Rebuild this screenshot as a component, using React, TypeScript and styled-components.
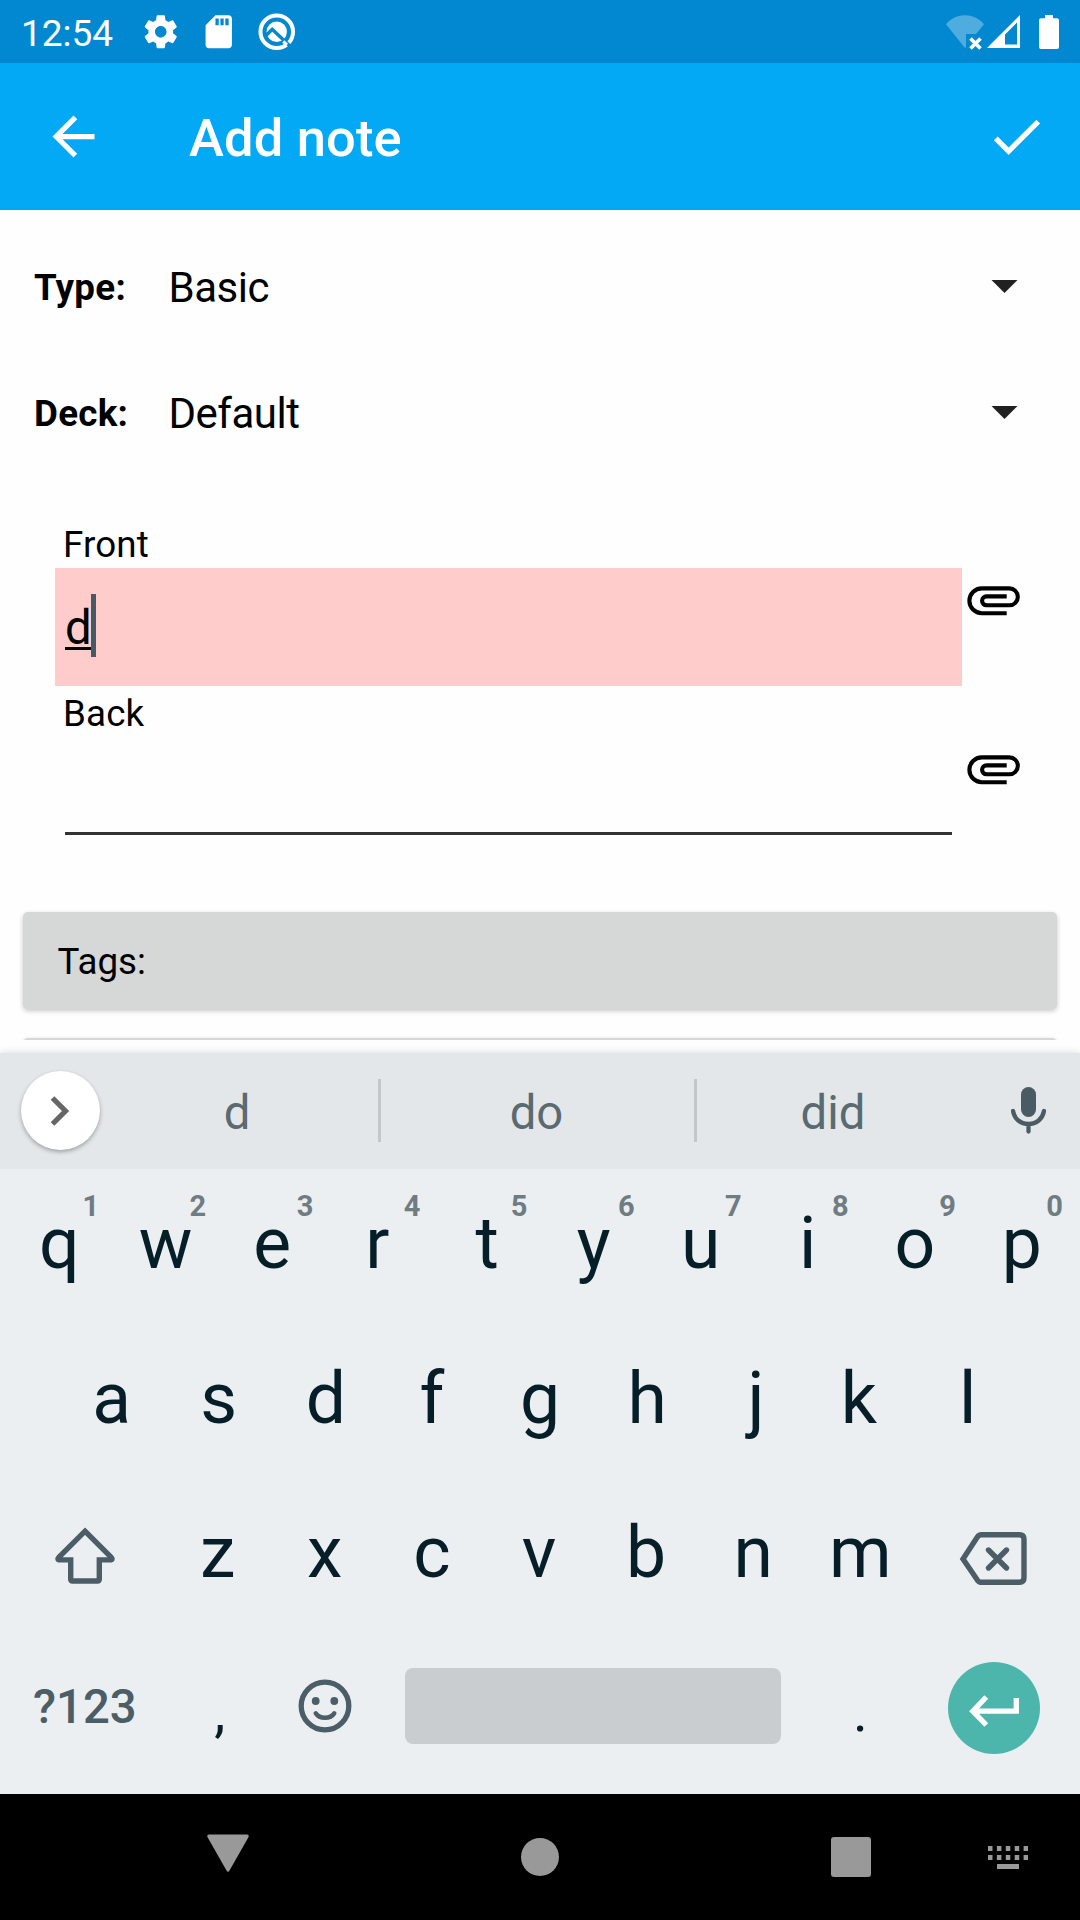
import React from "react";
import styled, { createGlobalStyle } from "styled-components";

const GlobalStyle = createGlobalStyle`
  * { box-sizing: border-box; }
  body { margin: 0; background: #fff; }
  svg { display: block; flex: none; }
`;

const Screen = styled.div`
  width: 1080px;
  height: 1920px;
  display: flex;
  flex-direction: column;
  overflow: hidden;
  background: #fefefe;
  color: #000;
  font-family: Roboto, "Liberation Sans", sans-serif;
`;

/* ---------- system status bar ---------- */
const StatusBar = styled.header`
  flex: none;
  height: 63px;
  display: flex;
  align-items: center;
  padding: 0 21px 0 21px;
  background: #0288d1;
  color: #fff;
`;
const Clock = styled.span`
  width: 120px;
  padding-top: 4px;
  font-size: 37px;
  line-height: 60px;
`;
const NotificationIcons = styled.div`
  display: flex;
  align-items: center;
  gap: 18.5px;
`;
const SystemIcons = styled.div`
  display: flex;
  align-items: center;
  margin-left: auto;
`;
const StatusSlot = styled.div<{ $right: number }>`
  margin-right: ${(p) => p.$right}px;
`;

/* ---------- app bar ---------- */
const AppBar = styled.div`
  flex: none;
  height: 147px;
  display: flex;
  align-items: center;
  padding: 0 32px 1px 42px;
  background: #03a9f4;
  color: #fff;
`;
const Title = styled.h1`
  flex: 1;
  margin: 0 0 0 84px;
  padding-top: 4px;
  font-size: 52.5px;
  font-weight: 500;
  line-height: 62px;
  letter-spacing: 0.15px;
`;

/* ---------- note form ---------- */
const Form = styled.main`
  flex: none;
  height: 830px;
  padding-top: 14px;
  display: flex;
  flex-direction: column;
  overflow: hidden;
`;
const SelectRow = styled.div`
  flex: none;
  height: 126px;
  display: flex;
  align-items: center;
  padding: 0 62px 0 34px;
`;
const SelectLabel = styled.span`
  width: 134.5px;
  font-size: 36.75px;
  font-weight: 700;
  letter-spacing: 0.25px;
`;
const SelectValue = styled.span`
  flex: 1;
  font-size: 42px;
  letter-spacing: -0.5px;
`;
const DropIcon = styled.svg`
  margin-bottom: 1px;
`;
const Fields = styled.div`
  flex: none;
  margin: 41px 55px 57px;
`;
const FieldLabel = styled.div`
  height: 51px;
  padding: 4px 0 0 8px;
  font-size: 36.75px;
  line-height: 47px;
  letter-spacing: 0.15px;
`;
const FieldRow = styled.div`
  display: flex;
  align-items: flex-start;
`;
const Input = styled.div<{ $duplicate?: boolean }>`
  width: 907px;
  height: 118px;
  display: flex;
  flex-direction: column;
  justify-content: ${(p) => (p.$duplicate ? "center" : "flex-end")};
  padding: ${(p) => (p.$duplicate ? "0 10px 3px" : "0 10px 20px")};
  background: ${(p) => (p.$duplicate ? "#ffcccc" : "transparent")};
`;
const Typed = styled.div`
  height: 63px;
  display: flex;
  align-items: flex-start;
  font-size: 47.25px;
  line-height: 63px;
`;
const Composing = styled.span`
  padding-top: 3px;
  text-decoration: underline;
  text-decoration-thickness: 3px;
  text-underline-offset: 3px;
  text-decoration-skip-ink: none;
`;
const Caret = styled.span`
  width: 5px;
  height: 63px;
  margin-left: -1px;
  background: #455a64;
`;
const Underline = styled.div`
  height: 3px;
  background: #333;
`;
const FormButton = styled.div`
  flex: none;
  height: 97px;
  margin: 0 23px 29px;
  padding: 2px 0 0 34.5px;
  border-radius: 5px;
  background: #d6d7d7;
  box-shadow: 0 2px 5px rgba(0, 0, 0, 0.22);
  font-size: 36.75px;
  line-height: 95px;
`;

/* ---------- keyboard ---------- */
const Keyboard = styled.section`
  flex: none;
  height: 741px;
  margin-top: 13px;
  display: flex;
  flex-direction: column;
  background: #eceff1;
  box-shadow: 0 -1px 7px rgba(0, 0, 0, 0.12);
  color: #061e27;
`;
const Suggestions = styled.div`
  flex: none;
  height: 116px;
  display: grid;
  grid-template-columns: 98px 280px 3px 313px 3px 274px 109px;
  align-items: center;
  background: #e3e7e9;
`;
const Expand = styled.div`
  width: 79px;
  height: 79px;
  margin: 0 0 1px 21px;
  padding-right: 1px;
  display: grid;
  place-items: center;
  border-radius: 50%;
  background: #fff;
  box-shadow: 0 2px 4px rgba(0, 0, 0, 0.3);
`;
const Suggestion = styled.span`
  padding: 4px 2px 0 0;
  text-align: center;
  font-size: 47.25px;
  line-height: 60px;
  color: #5a6a71;
`;
const Divider = styled.span`
  height: 63px;
  margin-bottom: 1px;
  background: #c2c7ca;
`;
const rowPadding = {
  full: "0 4.5px",
  inset: "0 58px",
  lower: "0 5.5px 0 3.5px",
};
const KeyRow = styled.div<{ $kind?: keyof typeof rowPadding }>`
  flex: none;
  height: 154.5px;
  display: flex;
  padding: ${(p) => rowPadding[p.$kind ?? "full"]};
`;
const Key = styled.div<{ $wide?: boolean; $center?: boolean }>`
  position: relative;
  flex: ${(p) => (p.$wide ? 1.5 : 1)} 0 0;
  display: flex;
  justify-content: center;
  align-items: ${(p) => (p.$center ? "center" : "flex-start")};
  font-size: 71.4px;
  line-height: 149px;
`;
const Letter = styled.span<{ $shift: number }>`
  margin-left: ${(p) => p.$shift * 2}px;
`;
const Hint = styled.span`
  position: absolute;
  top: 20px;
  right: 12.5px;
  font-size: 29px;
  font-weight: 700;
  line-height: 34px;
  color: #6f7c82;
`;
const Punctuation = styled.span<{ $shift?: number }>`
  margin-left: ${(p) => (p.$shift ?? 0) * 2}px;
  font-size: 56px;
  line-height: 159px;
`;
const SymbolsLabel = styled.span`
  margin-left: 2px;
  font-size: 47.25px;
  font-weight: 500;
  line-height: 149px;
  color: #4b5d66;
`;
const SpaceKey = styled.div`
  flex: none;
  width: 428.4px;
  display: flex;
  justify-content: center;
  align-items: flex-start;
  padding-top: 35.5px;
`;
const SpaceBar = styled.div`
  width: 376px;
  height: 76px;
  border-radius: 8px;
  background: #c9cdd0;
`;
const Enter = styled.div`
  width: 92px;
  height: 92px;
  margin-bottom: 3px;
  display: grid;
  place-items: center;
  border-radius: 50%;
  background: #4db6ac;
`;

/* ---------- system navigation ---------- */
const NavBar = styled.nav`
  flex: none;
  height: 126px;
  display: grid;
  grid-template-columns: 96px 264px 360px 262px 51px 47px;
  justify-items: center;
  align-items: center;
  background: #000;
`;

const ink = "#4b5d66";

const letterShift: Record<string, number> = { q: 1.2, w: 0.5, r: -2, t: 0.7, f: -1, j: 1.8, k: -2.5, l: -0.8 };

const Gear = () => (
  <svg width="39.5" height="39.5" viewBox="0 0 24 24" fill="#fff">
    <path d="M19.43 12.98c.04-.32.07-.64.07-.98s-.03-.66-.07-.98l2.11-1.65c.19-.15.24-.42.12-.64l-2-3.46c-.12-.22-.39-.3-.61-.22l-2.49 1c-.52-.4-1.08-.73-1.69-.98l-.38-2.65C14.46 2.18 14.25 2 14 2h-4c-.25 0-.46.18-.49.42l-.38 2.65c-.61.25-1.17.59-1.69.98l-2.49-1c-.23-.09-.49 0-.61.22l-2 3.46c-.13.22-.07.49.12.64l2.11 1.65c-.04.32-.07.65-.07.98s.03.66.07.98l-2.11 1.65c-.19.15-.24.42-.12.64l2 3.46c.12.22.39.3.61.22l2.49-1c.52.4 1.08.73 1.69.98l.38 2.65c.03.24.24.42.49.42h4c.25 0 .46-.18.49-.42l.38-2.65c.61-.25 1.17-.59 1.69-.98l2.49 1c.23.09.49 0 .61-.22l2-3.46c.12-.22.07-.49-.12-.64l-2.11-1.65zM12 15.5c-1.93 0-3.5-1.57-3.5-3.5s1.57-3.5 3.5-3.5 3.5 1.57 3.5 3.5-1.57 3.5-3.5 3.5z" />
  </svg>
);

const SdCard = () => (
  <svg width="39.5" height="39.5" viewBox="0 0 24 24" fill="#fff">
    <path d="M18 2h-8L4.02 8 4 20c0 1.1.9 2 2 2h12c1.1 0 2-.9 2-2V4c0-1.1-.9-2-2-2zm-6 6h-2V4h2v4zm3 0h-2V4h2v4zm3 0h-2V4h2v4z" />
  </svg>
);

const AndroidQ = () => (
  <svg width="39.5" height="39.5" viewBox="-19.75 -19.75 39.5 39.5" fill="none">
    <circle r="16.3" stroke="#fff" strokeWidth="4" />
    <circle r="10.2" fill="#fff" />
    <path d="M-10.5 3.5L-4.5 -2.5L15 16" stroke="#0288d1" strokeWidth="3.4" />
    <path d="M6.5 9.6L10.2 13.2" stroke="#fff" strokeWidth="3" />
  </svg>
);

const WifiOff = () => (
  <svg width="40" height="36" viewBox="0 0 40 36">
    <path d="M1 10.3C11-1.6 29-1.6 39 10.3L31 20H21V33L20 34Z" fill="#fff" fillOpacity="0.3" />
    <path d="M25.5 24.5l10 10M35.5 24.5l-10 10" stroke="#fff" strokeWidth="3.6" />
  </svg>
);

const Signal = () => (
  <svg width="33" height="33" viewBox="0 0 33 33" fill="#fff">
    <path fillRule="evenodd" d="M33 0V33H0ZM30 7.5L18 19.5V29.5H30Z" />
  </svg>
);

const Battery = () => (
  <svg width="20" height="34" viewBox="0 0 20 34" fill="#fff">
    <path d="M6 0h8v3.3h4a2 2 0 0 1 2 2V32a2 2 0 0 1-2 2H2a2 2 0 0 1-2-2V5.3a2 2 0 0 1 2-2h4z" />
  </svg>
);

const BackArrow = () => (
  <svg width="63" height="63" viewBox="0 0 24 24" fill="#fff">
    <path d="M20 11H7.83l5.59-5.59L12 4l-8 8 8 8 1.41-1.41L7.83 13H20v-2z" />
  </svg>
);

const Check = () => (
  <svg width="63" height="63" viewBox="0 0 24 24" fill="#fff">
    <path d="M9 16.17L4.83 12l-1.42 1.41L9 19 21 7l-1.41-1.41z" />
  </svg>
);

const DropArrow = () => (
  <DropIcon width="27" height="13" viewBox="0 0 27 13">
    <path d="M0.5 0H26.5L13.5 13Z" fill="#212121" />
  </DropIcon>
);

const Attachment = () => (
  <svg width="63" height="63" viewBox="0 0 63 63" fill="none" stroke="#000" strokeWidth="4.1">
    <path d="M44.7 45.2H19.8A12.4 12.4 0 0 1 19.8 20.4H47.4A8.45 8.45 0 0 1 47.4 37.3H24.5A4.45 4.45 0 0 1 24.5 28.4H44.7" />
  </svg>
);

const Chevron = () => (
  <svg width="20" height="30" viewBox="0 0 20 30" fill="none">
    <path d="M2.5 2L15.5 15L2.5 28" stroke="#666" strokeWidth="5.2" />
  </svg>
);

const MicIcon = styled.svg`
  margin: 0 0 1px 40px;
`;
const Mic = () => (
  <MicIcon width="35" height="47" viewBox="0 0 35 47" fill="none">
    <rect x="10" y="0" width="15" height="30" rx="7.5" fill="#4a5b64" />
    <path d="M2 24C3.5 32 9.5 37 17.5 37S31.5 32 33 24M17.5 37V44.5" stroke="#4a5b64" strokeWidth="4.3" strokeLinecap="round" />
  </MicIcon>
);

const KeyIcon = styled.svg<{ $top: number; $right?: number }>`
  margin-top: ${(p) => p.$top}px;
  margin-right: ${(p) => p.$right ?? 0}px;
`;

const Shift = () => (
  <KeyIcon $top={44} $right={-2} width="70" height="68" viewBox="0 0 70 68" fill="none">
    <path d="M35 9.2L61 35.2Q63.5 37.9 60 37.9H49.3V57Q49.3 59 47.3 59H22.7Q20.7 59 20.7 57V37.9H10Q6.5 37.9 9 35.2Z" stroke={ink} strokeWidth="5.4" />
  </KeyIcon>
);

const Backspace = () => (
  <KeyIcon $top={47} $right={2} width="77" height="68" viewBox="0 0 77 68" fill="none" stroke={ink} strokeWidth="5.4">
    <path d="M8 34L22.5 11.8Q24 9.8 26.5 9.8H64.5Q69 9.8 69 14.3V52.8Q69 57.3 64.5 57.3H26.5Q24 57.3 22.5 55.3Z" />
    <path d="M33.5 25L51.5 43M51.5 25L33.500 43" strokeLinecap="round" />
  </KeyIcon>
);

const Emoji = () => (
  <KeyIcon $top={46} width="54" height="54" viewBox="-27 -27 54 54" fill="none">
    <circle r="23.8" stroke={ink} strokeWidth="5.3" />
    <circle cx="-9.3" cy="-5" r="3.9" fill={ink} />
    <circle cx="9.3" cy="-5" r="3.9" fill={ink} />
    <path d="M-9.3 7.3C-5.5 13.3 5.5 13.3 9.3 7.3" stroke={ink} strokeWidth="4.4" strokeLinecap="round" />
  </KeyIcon>
);

const EnterIcon = styled.svg`
  margin-top: 6px;
`;
const EnterArrow = () => (
  <EnterIcon width="51" height="32" viewBox="0 0 51 32" fill="none">
    <path d="M47.3 3V16.2H5M17.3 2L3.8 16.2L17.3 30" stroke="#fff" strokeWidth="5.3" />
  </EnterIcon>
);

const NavBack = () => (
  <svg width="42" height="46" viewBox="0 0 42 46">
    <path d="M2.5 0.5H39.5Q43 0.5 41 4L22.5 36.5Q21 39 19.5 36.5L1 4Q-1 0.5 2.5 0.5Z" fill="#999" />
  </svg>
);
const NavHome = () => (
  <svg width="38" height="38" viewBox="0 0 38 38">
    <circle cx="19" cy="19" r="19" fill="#999" />
  </svg>
);
const NavRecents = () => (
  <svg width="40" height="40" viewBox="0 0 40 40">
    <rect width="40" height="40" rx="3" fill="#999" />
  </svg>
);
const NavKeyboard = () => (
  <svg width="40" height="23" viewBox="0 0 40 23" fill="#999">
    {[0, 9].map((y) =>
      [0, 1, 2, 3, 4].map((c) => <rect key={`${y}-${c}`} x={c * 8.9} y={y} width="4.5" height="5" />)
    )}
    <rect x="9" y="18" width="22" height="5" />
  </svg>
);

const LetterKey = ({ char, hint }: { char: string; hint?: number }) => (
  <Key>
    <Letter $shift={letterShift[char] ?? 0}>{char}</Letter>
    {hint !== undefined && <Hint>{hint}</Hint>}
  </Key>
);

export default function App() {
  return (
    <Screen>
      <GlobalStyle />
      <StatusBar>
        <Clock>12:54</Clock>
        <NotificationIcons>
          <Gear />
          <SdCard />
          <AndroidQ />
        </NotificationIcons>
        <SystemIcons>
          <StatusSlot $right={2}><WifiOff /></StatusSlot>
          <StatusSlot $right={19}><Signal /></StatusSlot>
          <Battery />
        </SystemIcons>
      </StatusBar>

      <AppBar>
        <BackArrow />
        <Title>Add note</Title>
        <Check />
      </AppBar>

      <Form>
        <SelectRow>
          <SelectLabel>Type:</SelectLabel>
          <SelectValue>Basic</SelectValue>
          <DropArrow />
        </SelectRow>
        <SelectRow>
          <SelectLabel>Deck:</SelectLabel>
          <SelectValue>Default</SelectValue>
          <DropArrow />
        </SelectRow>
        <Fields>
          <FieldLabel>Front</FieldLabel>
          <FieldRow>
            <Input $duplicate>
              <Typed>
                <Composing>d</Composing>
                <Caret />
              </Typed>
            </Input>
            <Attachment />
          </FieldRow>
          <FieldLabel>Back</FieldLabel>
          <FieldRow>
            <Input>
              <Underline />
            </Input>
            <Attachment />
          </FieldRow>
        </Fields>
        <FormButton>Tags:</FormButton>
        <FormButton />
      </Form>

      <Keyboard>
        <Suggestions>
          <Expand><Chevron /></Expand>
          <Suggestion>d</Suggestion>
          <Divider />
          <Suggestion>do</Suggestion>
          <Divider />
          <Suggestion>did</Suggestion>
          <Mic />
        </Suggestions>
        <KeyRow>
          {"qwertyuiop".split("").map((k, i) => (
            <LetterKey key={k} char={k} hint={(i + 1) % 10} />
          ))}
        </KeyRow>
        <KeyRow $kind="inset">
          {"asdfghjkl".split("").map((k) => (
            <LetterKey key={k} char={k} />
          ))}
        </KeyRow>
        <KeyRow $kind="lower">
          <Key $wide><Shift /></Key>
          {"zxcvbnm".split("").map((k) => (
            <LetterKey key={k} char={k} />
          ))}
          <Key $wide><Backspace /></Key>
        </KeyRow>
        <KeyRow $kind="lower">
          <Key $wide><SymbolsLabel>?123</SymbolsLabel></Key>
          <Key><Punctuation $shift={2}>,</Punctuation></Key>
          <Key><Emoji /></Key>
          <SpaceKey><SpaceBar /></SpaceKey>
          <Key><Punctuation>.</Punctuation></Key>
          <Key $wide $center><Enter><EnterArrow /></Enter></Key>
        </KeyRow>
      </Keyboard>

      <NavBar>
        <span />
        <NavBack />
        <NavHome />
        <NavRecents />
        <NavKeyboard />
      </NavBar>
    </Screen>
  );
}
